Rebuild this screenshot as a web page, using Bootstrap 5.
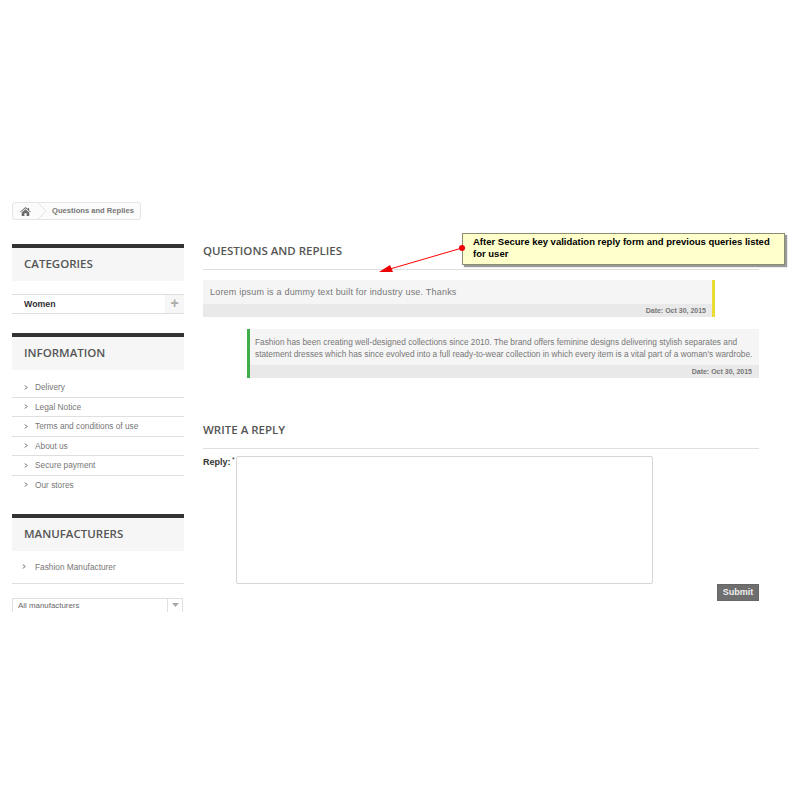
<!DOCTYPE html>
<html lang="en">
<head>
<meta charset="utf-8">
<title>Questions and Replies</title>
<link href="https://cdn.jsdelivr.net/npm/bootstrap@5.3.0/dist/css/bootstrap.min.css" rel="stylesheet">
<style>
html,body{height:800px;overflow:hidden}
body{background:#fff;font-family:"Liberation Sans",Arial,sans-serif;font-size:9px;color:#777;position:relative}
.pg{padding:202px 41px 0 12px}
.crumb{width:129px;height:18px;border:1px solid #e4e4e4;border-radius:3px;background:#fbfbfb;font-weight:700;color:#777;font-size:7.6px;overflow:hidden;white-space:nowrap}
.crumb-home{width:18px;height:16px;padding-left:7px;box-sizing:content-box;flex:none}
.crumb-sep{width:9px;height:16px;margin-right:5px;flex:none}
.main-row{margin-top:24px;gap:19px;align-items:flex-start}
.side{width:172px;flex:none}
.cols{flex:1;min-width:0}
.blk-title{border-top:4px solid #333;background:#f6f6f6;height:37px;padding-left:12px;font-family:"Open Sans",sans-serif;font-weight:600;font-size:11.5px;color:#555;line-height:31px}
.cat-row{margin-top:13px;height:20px;border-top:1px solid #dfdfdf;border-bottom:1px solid #dfdfdf;padding-left:12px;font-weight:700;color:#333;font-size:8.8px;line-height:18px}
.cat-plus{width:19px;background:#f6f6f6;color:#aaa;font-size:14px;line-height:17px;text-align:center;font-weight:700}
.info-blk{margin-top:19px}
.lnk{height:19.6px;padding-left:12px;line-height:18px;border-bottom:1px solid #dfdfdf;font-size:8.3px;color:#777}
.lnk:last-child{border-bottom:0}
.chev{width:11px;flex:none;display:flex;align-items:center;height:18px}
.lnk-list{padding-top:8px}
.mf-blk{margin-top:18px}
.mf-lnk{height:33px;padding:7px 0 0 10px;border-bottom:1px solid #dfdfdf;line-height:18px;font-size:8.3px}
.mf-lnk .chev{width:13px}
.mf-sel{margin-top:14px;width:171px;height:14px;border:1px solid #dfdfdf;border-bottom:0;overflow:hidden;padding-left:5px;font-size:7.9px;line-height:13px;color:#666}
.mf-arrow{width:15px;border-left:1px solid #dfdfdf;height:13px}
.pg-h{font-family:"Open Sans",sans-serif;font-weight:600;font-size:11.5px;color:#555;border-bottom:1px solid #dfdfdf;height:26px;line-height:13px;margin:0}
.msg{background:#f5f5f5;font-size:9px;letter-spacing:.2px;line-height:14.5px}
.msg-foot{background:#e9e9e9;height:13px;font-weight:700;font-size:7px;line-height:13px;text-align:right;color:#777;letter-spacing:0}
.msg-one{width:512px;margin-top:10px;border-right:3px solid #eadc34}
.msg-one .msg-body{height:24px;padding:5px 7px 0}
.msg-one .msg-foot{padding-right:6px}
.msg-two{width:512px;margin:12px 0 0 44px;border-left:3px solid #3fae49}
.msg-two .msg-foot{padding-right:7px}
.msg-two .msg-body{height:36px;padding:7px 0 0 5px;white-space:nowrap;font-size:8.3px;letter-spacing:0;line-height:12px}
.h-reply{margin-top:45px}
.reply-row{margin-top:7px}
.reply-lbl{width:33px;flex:none;font-weight:700;color:#333;font-size:9px;line-height:13px;white-space:nowrap}
.reply-star{font-size:7px;font-weight:400;line-height:1;vertical-align:3px;margin-left:-1px}
.reply-txt{width:417px;height:128px;border:1px solid #d6d6d6;border-radius:2px;background:#fff;display:block;resize:none}
.sub-wrap{height:17px}
.sub-btn{width:42px;height:17px;background:#6f6f6f;border:1px solid #666;color:#eee;font-weight:700;font-size:9px;padding:0;line-height:15px;border-radius:0}
.note{position:absolute;left:462px;top:233px;width:323px;height:32px;background:#ffffcc;border:1px solid #8c8c70;box-shadow:2px 2px 1px #999;color:#000;font-weight:700;font-size:9.5px;line-height:12px;padding:2px 10px}
.note-arrow{position:absolute;left:370px;top:240px;width:100px;height:40px;overflow:visible}
</style>
</head>
<body>
<div class="pg">
  <div class="crumb d-flex align-items-center">
    <span class="crumb-home d-flex align-items-center">
      <svg width="11" height="9" viewBox="0 0 12 10"><path fill="#6b6b6b" d="M6 0 0 5.200l.6.7L6 1.400l5.400 4.500.6-.7-2-1.700V1H8.600v1.300zM1.800 6v4h3V7h2.400v3h3V6L6 2.500z"/></svg>
    </span>
    <svg class="crumb-sep" viewBox="0 0 9 16"><path d="M0 0 8 8 0 16" fill="none" stroke="#e4e4e4"/></svg>
    <span>Questions and Replies</span>
  </div>
  <div class="main-row d-flex">
    <aside class="side">
      <div class="blk-title">CATEGORIES</div>
      <div class="cat-row d-flex justify-content-between"><span>Women</span><span class="cat-plus">+</span></div>
      <div class="info-blk">
        <div class="blk-title">INFORMATION</div>
        <div class="lnk-list">
          <div class="lnk d-flex"><span class="chev"><svg width="4" height="5" viewBox="0 0 4 5"><path d="M1 .5 3 2.500 1 4.500" fill="none" stroke="#555" stroke-width="1"/></svg></span>Delivery</div>
          <div class="lnk d-flex"><span class="chev"><svg width="4" height="5" viewBox="0 0 4 5"><path d="M1 .5 3 2.500 1 4.500" fill="none" stroke="#555" stroke-width="1"/></svg></span>Legal Notice</div>
          <div class="lnk d-flex"><span class="chev"><svg width="4" height="5" viewBox="0 0 4 5"><path d="M1 .5 3 2.500 1 4.500" fill="none" stroke="#555" stroke-width="1"/></svg></span>Terms and conditions of use</div>
          <div class="lnk d-flex"><span class="chev"><svg width="4" height="5" viewBox="0 0 4 5"><path d="M1 .5 3 2.500 1 4.500" fill="none" stroke="#555" stroke-width="1"/></svg></span>About us</div>
          <div class="lnk d-flex"><span class="chev"><svg width="4" height="5" viewBox="0 0 4 5"><path d="M1 .5 3 2.500 1 4.500" fill="none" stroke="#555" stroke-width="1"/></svg></span>Secure payment</div>
          <div class="lnk d-flex"><span class="chev"><svg width="4" height="5" viewBox="0 0 4 5"><path d="M1 .5 3 2.500 1 4.500" fill="none" stroke="#555" stroke-width="1"/></svg></span>Our stores</div>
        </div>
      </div>
      <div class="mf-blk">
        <div class="blk-title">MANUFACTURERS</div>
        <div class="mf-lnk d-flex"><span class="chev"><svg width="4" height="5" viewBox="0 0 4 5"><path d="M1 .5 3 2.500 1 4.500" fill="none" stroke="#555" stroke-width="1"/></svg></span>Fashion Manufacturer</div>
        <div class="mf-sel d-flex justify-content-between"><span>All manufacturers</span>
          <span class="mf-arrow d-flex align-items-center justify-content-center"><svg width="7" height="4" viewBox="0 0 7 4"><path d="M0 0h7L3.500 4z" fill="#aaa"/></svg></span>
        </div>
      </div>
    </aside>
    <main class="cols">
      <h1 class="pg-h">QUESTIONS AND REPLIES</h1>
      <div class="msg msg-one">
        <div class="msg-body">Lorem ipsum is a dummy text built for industry use. Thanks</div>
        <div class="msg-foot">Date: Oct 30, 2015</div>
      </div>
      <div class="msg msg-two">
        <div class="msg-body">Fashion has been creating well-designed collections since 2010. The brand offers feminine designs delivering stylish separates and<br>statement dresses which has since evolved into a full ready-to-wear collection in which every item is a vital part of a woman's wardrobe.</div>
        <div class="msg-foot">Date: Oct 30, 2015</div>
      </div>
      <h2 class="pg-h h-reply">WRITE A REPLY</h2>
      <form>
        <div class="reply-row d-flex">
          <label class="reply-lbl" for="reply">Reply: <span class="reply-star">*</span></label>
          <textarea id="reply" class="reply-txt"></textarea>
        </div>
        <div class="sub-wrap d-flex justify-content-end"><button type="button" class="btn sub-btn">Submit</button></div>
      </form>
    </main>
  </div>
</div>
<div class="note">After Secure key validation reply form and previous queries listed for user</div>
<svg class="note-arrow" viewBox="0 0 100 40"><line x1="92" y1="8" x2="20" y2="29" stroke="#f00" stroke-width="1"/><path d="M9 32 20 25 23 32z" fill="#e00"/><circle cx="92" cy="8" r="3" fill="#e00"/></svg>
</body>
</html>
